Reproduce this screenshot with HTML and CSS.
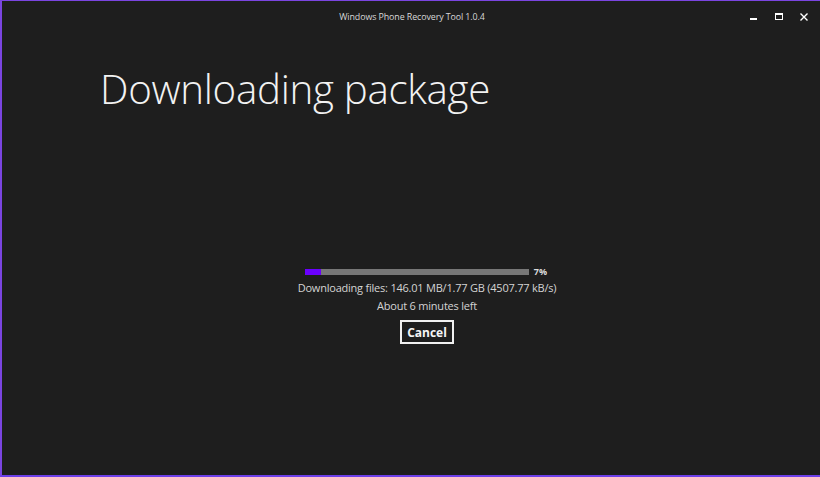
FILE: index.html
```html
<!DOCTYPE html>
<html>
<head>
<meta charset="utf-8">
<link rel="stylesheet" href="styles.css">
</head>
<body>
<div class="window">
  <div class="titlebar">
    <div class="title">Windows Phone Recovery Tool 1.0.4</div>
    <div class="controls">
      <span class="ctl"><svg width="10" height="10" viewBox="0 0 10 10"><rect x="1" y="6" width="7" height="2" fill="#fff"/></svg></span>
      <span class="ctl"><svg width="10" height="10" viewBox="0 0 10 10"><rect x="1.5" y="1.5" width="7" height="6" fill="none" stroke="#fff" stroke-width="1"/><rect x="1" y="1" width="8" height="2" fill="#fff"/></svg></span>
      <span class="ctl"><svg width="10" height="10" viewBox="0 0 10 10"><path d="M1.5 1.5 L8.5 8.5 M8.5 1.5 L1.5 8.5" stroke="#fff" stroke-width="1.4"/></svg></span>
    </div>
  </div>
  <h1 class="heading">Downloading package</h1>
  <div class="progress-area">
    <div class="bar-row">
      <div class="track"><div class="fill" style="width:7%"></div></div>
      <span class="pct">7%</span>
    </div>
    <div class="status first">Downloading files: 146.01 MB/1.77 GB (4507.77 kB/s)</div>
    <div class="status">About 6 minutes left</div>
    <button class="cancel">Cancel</button>
  </div>
</div>
</body>
</html>
```
FILE: styles.css
```css
html, body {
  margin: 0;
  padding: 0;
  height: 100%;
}
body {
  background: #1e1e1e;
  font-family: "Open Sans", "Noto Sans", sans-serif;
  color: #ffffff;
}
.window {
  box-sizing: border-box;
  height: 477px;
  border-top: 1px solid #7b45e0;
  border-left: 2px solid #7b45e0;
  border-bottom: 2px solid #6c3fe8;
  display: flex;
  flex-direction: column;
}
.titlebar {
  height: 31px;
  display: flex;
  align-items: center;
  justify-content: center;
  position: relative;
}
.title {
  font-size: 8.9px;
  letter-spacing: -0.1px;
  color: #d8d8d8;
  margin-left: 2px;
  margin-top: -1px;
}
.controls {
  position: absolute;
  right: 11px;
  top: 11px;
  display: flex;
  gap: 15px;
}
.ctl {
  width: 10px;
  height: 10px;
  display: flex;
}
.heading {
  margin: 33px 0 0 98px;
  font-weight: 300;
  font-size: 40.3px;
  line-height: 48px;
  color: #f2f2f2;
  letter-spacing: -0.3px;
}
.progress-area {
  margin-top: 152px;
  display: flex;
  flex-direction: column;
  align-items: center;
  padding-left: 32px;
}
.bar-row {
  display: flex;
  align-items: center;
  gap: 5px;
  margin-left: -2px;
}
.track {
  width: 224px;
  height: 6px;
  background: #777777;
}
.fill {
  height: 100%;
  background: #6a00ff;
}
.pct {
  font-size: 9px;
  font-weight: 700;
  color: #dcdcdc;
}
.status {
  font-size: 11px;
  letter-spacing: -0.22px;
  color: #d4d4d4;
  line-height: 18px;
}
.status.first {
  margin-top: 1px;
}
.cancel {
  margin-top: 5px;
  width: 54px;
  height: 24px;
  background: transparent;
  border: 2px solid #f0f0f0;
  color: #f5f5f5;
  font-family: "Open Sans", sans-serif;
  font-weight: 700;
  font-size: 12px;
  padding: 0;
}
```
